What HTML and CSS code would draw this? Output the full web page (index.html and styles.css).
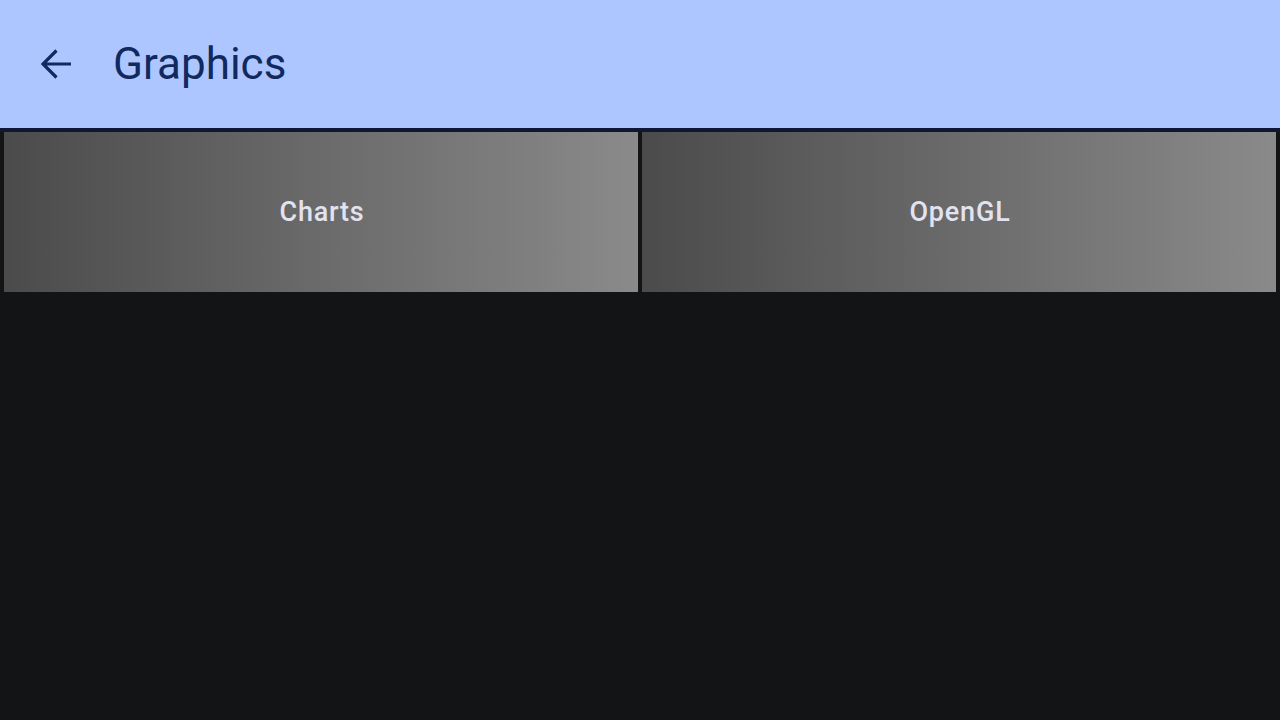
FILE: index.html
```html
<!DOCTYPE html>
<html>
<head>
<meta charset="utf-8">
<link rel="stylesheet" href="styles.css">
</head>
<body>
<header class="appbar">
  <button class="back" aria-label="Back">
    <svg width="32" height="32" viewBox="0 0 32 32"><path d="M31 16H3M16.5 2.5L3 16l13.5 13.5" fill="none" stroke="#112a5e" stroke-width="3.2"/></svg>
  </button>
  <h1 class="title">Graphics</h1>
</header>
<main class="grid">
  <div class="tile">Charts</div>
  <div class="tile">OpenGL</div>
</main>
</body>
</html>
```
FILE: styles.css
```css
html, body {
  margin: 0;
  padding: 0;
  background: #131416;
  font-family: Roboto, "Noto Sans", sans-serif;
  height: 100%;
}
.appbar {
  height: 128px;
  background: #aec6ff;
  display: flex;
  align-items: center;
  border-bottom: 4px solid #0e1734;
  box-sizing: content-box;
}
.back {
  background: none;
  border: 0;
  padding: 0;
  margin-left: 40px;
  width: 32px;
  height: 32px;
  display: flex;
  align-items: center;
  justify-content: center;
}
.title {
  margin: 0 0 0 41px;
  font-size: 44px;
  font-weight: 400;
  color: #112a5e;
  letter-spacing: 0;
}
.grid {
  display: grid;
  grid-template-columns: 1fr 1fr;
  gap: 4px;
  padding: 0 4px;
}
.tile {
  height: 160px;
  background: linear-gradient(to right, #4b4b4b, #8a8a8a);
  display: flex;
  align-items: center;
  justify-content: center;
  color: #e2e3f0;
  font-size: 27px;
  font-weight: 500;
  letter-spacing: 0.8px;
  padding-left: 2px;
}
```
